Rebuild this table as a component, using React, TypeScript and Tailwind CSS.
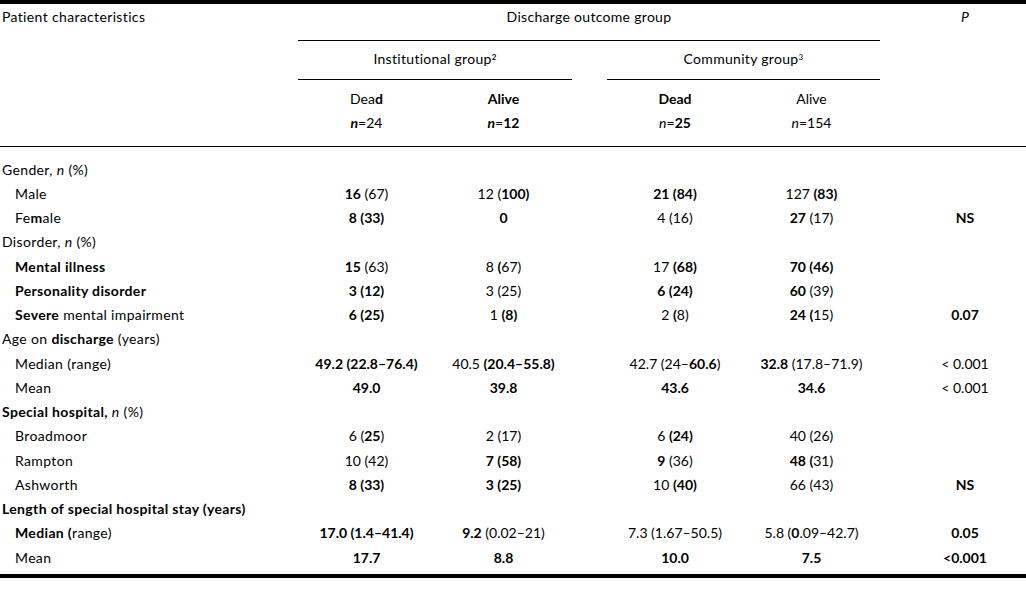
import type { ReactNode } from 'react'

const B = ({ children }: { children: ReactNode }) => <span className="font-bold">{children}</span>
const I = ({ children }: { children: ReactNode }) => <span className="italic">{children}</span>

type Row = {
  label: ReactNode
  sub?: boolean
  cells?: ReactNode[]
}

const rows: Row[] = [
  { label: <>Gender, <I>n</I> (%)</> },
  {
    label: 'Male',
    sub: true,
    cells: [<><B>16</B> (67)</>, <>12 (<B>100)</B></>, <B>21 (84)</B>, <>127 <B>(83)</B></>, ''],
  },
  {
    label: <>Fe<B>m</B>ale</>,
    sub: true,
    cells: [<B>8 (33)</B>, <B>0</B>, '4 (16)', <><B>27</B> (17)</>, <B>NS</B>],
  },
  { label: <>Disorder, <I>n</I> (%)</> },
  {
    label: <B>Mental illness</B>,
    sub: true,
    cells: [<><B>15</B> (63)</>, <>8 <B>(</B>67)</>, <>17 <B>(68)</B></>, <B>70 (46)</B>, ''],
  },
  {
    label: <B>Personality disorder</B>,
    sub: true,
    cells: [<B>3 (12)</B>, '3 (25)', <B>6 (24)</B>, <><B>60</B> (39)</>, ''],
  },
  {
    label: <><B>Severe</B> mental impairment</>,
    sub: true,
    cells: [<B>6 (25)</B>, <>1 <B>(8)</B></>, <>2 <B>(</B>8)</>, <><B>24 (</B>15)</>, <B>0.07</B>],
  },
  { label: <>Age on <B>discharge</B> (years)</> },
  {
    label: 'Median (range)',
    sub: true,
    cells: [
      <B>49.2 (22.8–76.4)</B>,
      <>40.5 <B>(20.4–55.8)</B></>,
      <>42.7 (24–<B>60.6</B>)</>,
      <><B>32.8</B> (17.8–71.9)</>,
      <>&lt; 0.001</>,
    ],
  },
  {
    label: 'Mean',
    sub: true,
    cells: [<B>49.0</B>, <B>39.8</B>, <B>43.6</B>, <B>34.6</B>, <>&lt; 0.001</>],
  },
  { label: <><B>Special hospital,</B> <I>n</I> (%)</> },
  {
    label: 'Broadmoor',
    sub: true,
    cells: [<>6 (<B>25</B>)</>, '2 (17)', <>6 <B>(24)</B></>, '40 (26)', ''],
  },
  {
    label: 'Rampton',
    sub: true,
    cells: ['10 (42)', <B>7 (58)</B>, <><B>9</B> (36)</>, <><B>48 (</B>31)</>, ''],
  },
  {
    label: 'Ashworth',
    sub: true,
    cells: [<B>8 (33)</B>, <B>3 (25)</B>, <>10 <B>(40)</B></>, '66 (43)', <B>NS</B>],
  },
  { label: <B>Length of special hospital stay (years)</B> },
  {
    label: <><B>Median (</B>range)</>,
    sub: true,
    cells: [
      <B>17.0 (1.4–41.4)</B>,
      <><B>9.2</B> (0.02–21)</>,
      '7.3 (1.67–50.5)',
      <>5.8 (<B>0</B>.09–42.7)</>,
      <B>0.05</B>,
    ],
  },
  {
    label: 'Mean',
    sub: true,
    cells: [<B>17.7</B>, <B>8.8</B>, <B>10.0</B>, <B>7.5</B>, <B>&lt;0.001</B>],
  },
]

const grid = 'grid grid-cols-[298px_137px_137px_35px_136px_137px_146px]'

export default function App() {
  return (
    <div
      className="w-[1026px] h-[590px] bg-white text-[14px] text-black"
      style={{ fontFamily: 'Lato, "Open Sans", sans-serif' }}
    >
      <div className="border-t-4 border-black">
        {/* header */}
        <div className={`${grid} border-b border-black leading-[24px]`}>
          <div className="row-span-4 pl-[2px] pt-[1px] tracking-[0.35px]">Patient characteristics</div>
          <div className="col-span-5 h-[37px] pt-[1px] text-center tracking-[0.3px] border-b border-black">
            Discharge outcome group
          </div>
          <div className="row-span-4 pl-[24px] pt-[1px] text-center italic">P</div>

          <div className="col-span-2 h-[39px] pt-[6px] text-center tracking-[0.3px] border-b border-black">
            Institutional group<sup className="text-[8px] font-bold">2</sup>
          </div>
          <div />
          <div className="col-span-2 h-[39px] pt-[6px] text-center tracking-[0.3px] border-b border-black">
            Community group<sup className="text-[8px]">3</sup>
          </div>

          <div className="pt-[7px] text-center">Dea<B>d</B></div>
          <div className="pt-[7px] text-center"><B>Alive</B></div>
          <div />
          <div className="pt-[7px] text-center"><B>Dead</B></div>
          <div className="pt-[7px] text-center">Alive</div>

          <div className="pb-[11px] text-center"><B><I>n</I></B>=24</div>
          <div className="pb-[11px] text-center"><B><I>n</I></B>=<B>12</B></div>
          <div />
          <div className="pb-[11px] text-center"><I>n</I>=<B>25</B></div>
          <div className="pb-[11px] text-center"><I>n</I>=154</div>
        </div>

        {/* body */}
        <div className="pt-[10px] pb-[5px] border-b-4 border-black">
          {rows.map((row, i) => (
            <div key={i} className={`${grid} h-[24.25px] items-center`}>
              <div className={`${row.sub ? 'pl-[15px]' : 'pl-[2px]'} tracking-[0.35px]`}>{row.label}</div>
              {row.cells ? (
                <>
                  <div className="text-center">{row.cells[0]}</div>
                  <div className="text-center">{row.cells[1]}</div>
                  <div />
                  <div className="text-center">{row.cells[2]}</div>
                  <div className="text-center">{row.cells[3]}</div>
                  <div className="pl-[24px] text-center">{row.cells[4]}</div>
                </>
              ) : null}
            </div>
          ))}
        </div>
      </div>
    </div>
  )
}
